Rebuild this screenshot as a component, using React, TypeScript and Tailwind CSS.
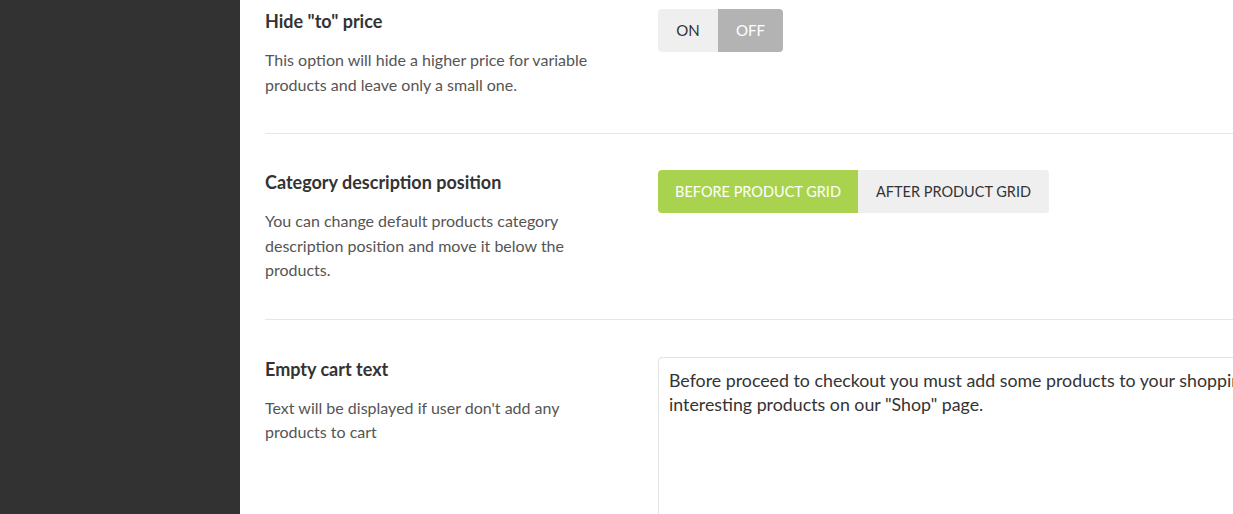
import React from "react";

const font = { fontFamily: "Lato, 'Noto Sans', sans-serif" };

function Row({
  title,
  desc,
  children,
  first,
}: {
  title: string;
  desc: string;
  children: React.ReactNode;
  first?: boolean;
}) {
  return (
    <div
      className={`flex items-start border-b border-[#e6e6e6] ${
        first ? "pt-[9px] pb-[36px]" : "pt-[36px] pb-[36px]"
      }`}
    >
      <div className="w-[393px] shrink-0">
        <h3 className="text-[18px] leading-[24px] font-bold text-[#333]">{title}</h3>
        <p className="mt-[15px] w-[350px] text-[16px] leading-[24.5px] text-[#555]">{desc}</p>
      </div>
      <div className="flex-1">{children}</div>
    </div>
  );
}

export default function App() {
  return (
    <div className="flex h-[514px] w-[1233px] overflow-hidden bg-white" style={font}>
      <aside className="w-[240px] shrink-0 bg-[#323232]" />
      <main className="flex-1 overflow-hidden pl-[25px]">
        <Row
          first
          title={'Hide "to" price'}
          desc="This option will hide a higher price for variable products and leave only a small one."
        >
          <div className="inline-flex h-[43px] overflow-hidden rounded-[4px] text-[15px]">
            <button className="w-[60px] bg-[#efefef] text-[#333]">ON</button>
            <button className="w-[65px] bg-[#b3b3b3] text-white">OFF</button>
          </div>
        </Row>
        <Row
          title="Category description position"
          desc="You can change default products category description position and move it below the products."
        >
          <div className="inline-flex h-[43px] overflow-hidden rounded-[4px] text-[14.5px]">
            <button className="w-[200px] bg-[#a9d34e] uppercase text-white">Before product grid</button>
            <button className="w-[191px] bg-[#efefef] uppercase text-[#333]">After product grid</button>
          </div>
        </Row>
        <div className="flex items-start pt-[37px]">
          <div className="w-[393px] shrink-0">
            <h3 className="text-[18px] leading-[24px] font-bold text-[#333]">Empty cart text</h3>
            <p className="mt-[15px] w-[350px] text-[16px] leading-[24.5px] text-[#555]">
              Text will be displayed if user don't add any products to cart
            </p>
          </div>
          <div className="flex-1">
            <div className="h-[200px] w-[760px] rounded-[4px] border border-[#e3e3e3] px-[10px] pt-[10px] text-[17.8px] leading-[24px] text-[#333] whitespace-nowrap">
              <div>Before proceed to checkout you must add some products to your shopping cart. You will find a lot of</div>
              <div>interesting products on our "Shop" page.</div>
            </div>
          </div>
        </div>
      </main>
    </div>
  );
}
